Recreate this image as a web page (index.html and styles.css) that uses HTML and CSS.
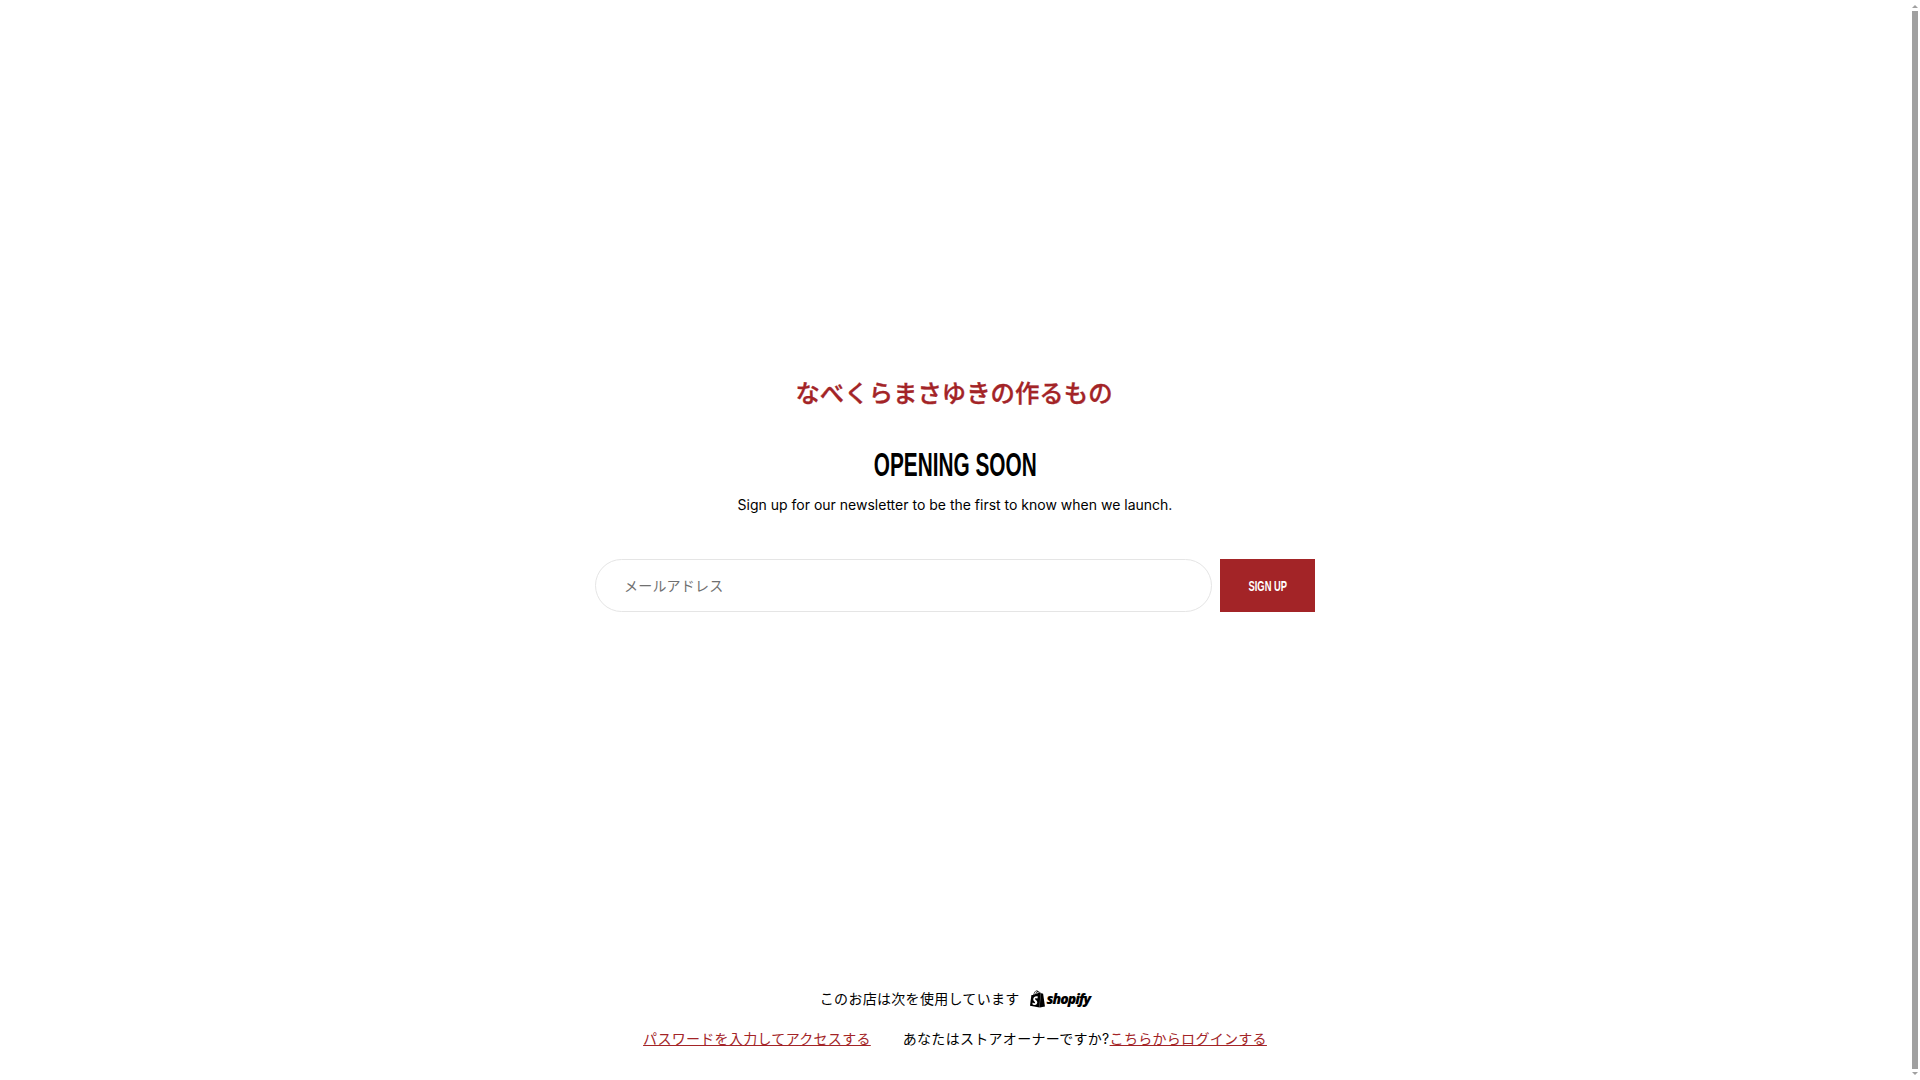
FILE: index.html
```html
<!DOCTYPE html>
<html lang="ja">
<head>
<meta charset="utf-8">
<title>なべくらまさゆきの作るもの</title>
<link rel="stylesheet" href="styles.css">
</head>
<body>
<main class="page">
  <section class="hero">
    <h1 class="store-name">なべくらまさゆきの作るもの</h1>
    <h2 class="heading"><span class="heading-text">OPENING SOON</span></h2>
    <p class="lead">Sign up for our newsletter to be the first to know when we launch.</p>
    <form class="signup">
      <input class="email" type="email" placeholder="メールアドレス">
      <button class="submit" type="button"><span class="submit-text">SIGN UP</span></button>
    </form>
  </section>
  <footer class="foot">
    <div class="powered">
      <span>このお店は次を使用しています</span>
      <span class="shopify">
        <svg class="bag" viewBox="0 0 24 24" aria-hidden="true"><path d="M15.337 23.979l7.216-1.561s-2.604-17.613-2.625-17.73c-.018-.116-.114-.192-.211-.192s-1.929-.136-1.929-.136-1.275-1.274-1.439-1.411c-.045-.037-.075-.057-.121-.074l-.914 21.104h.023zM11.71 11.305s-.81-.424-1.774-.424c-1.447 0-1.504.906-1.504 1.141 0 1.232 3.24 1.715 3.24 4.629 0 2.295-1.44 3.76-3.406 3.76-2.354 0-3.54-1.465-3.54-1.465l.646-2.086s1.245 1.066 2.28 1.066c.675 0 .975-.545.975-.932 0-1.619-2.654-1.694-2.654-4.359-.034-2.237 1.571-4.416 4.827-4.416 1.257 0 1.875.361 1.875.361l-.945 2.715-.02.01zM11.17.83c.136 0 .271.038.405.135-.984.465-2.064 1.639-2.508 3.992-.656.213-1.293.405-1.889.578C7.697 3.75 8.951.84 11.17.84V.83zm1.235 2.949v.135c-.754.232-1.583.484-2.394.736.466-1.777 1.333-2.645 2.085-2.971.193.501.309 1.176.309 2.1zm.539-2.234c.694.074 1.141.867 1.429 1.755-.349.114-.735.231-1.158.366v-.252c0-.752-.096-1.371-.271-1.871v.002zm2.992 1.289c-.02 0-.06.021-.078.021s-.289.075-.714.21c-.423-1.233-1.176-2.37-2.508-2.37h-.115C12.135.209 11.669 0 11.265 0 8.159 0 6.675 3.877 6.21 5.846c-1.194.365-2.063.636-2.16.674-.675.213-.694.232-.772.87-.075.462-1.83 14.063-1.83 14.063L15.009 24l.927-21.166z"/></svg>
        <span class="wordmark">shopify</span>
      </span>
    </div>
    <div class="links">
      <a class="link" href="#">パスワードを入力してアクセスする</a>
      <span class="owner">あなたはストアオーナーですか?<a class="link" href="#">こちらからログインする</a></span>
    </div>
  </footer>
</main>
<aside class="scrollbar" aria-hidden="true">
  <span class="arrow arrow-up"></span>
  <span class="thumb"></span>
  <span class="arrow arrow-down"></span>
</aside>
</body>
</html>
```

FILE: styles.css
```css
* { box-sizing: border-box; }
html, body { margin: 0; height: 100%; }
body {
  display: flex;
  height: 1080px;
  overflow: hidden;
  background: #fff;
  color: #000;
  font-family: Inter, "Noto Sans CJK JP", sans-serif;
  font-size: 14px;
}
.page {
  flex: 1;
  min-width: 0;
  display: flex;
  flex-direction: column;
  align-items: center;
}
.hero {
  width: 720px;
  padding-top: 373px;
  display: flex;
  flex-direction: column;
  align-items: center;
  text-align: center;
}
.store-name {
  margin: 0 2px 0 0;
  font-size: 24.4px;
  line-height: 40px;
  font-weight: 500;
  -webkit-text-stroke: 0.35px #a32427;
  color: #a32427;
}
.heading {
  margin: 32px 0 0;
  line-height: 40px;
  font-size: 33px;
  font-weight: 700;
  font-family: "Liberation Sans", sans-serif;
}
.heading-text {
  display: inline-block;
  transform: scaleX(0.63);
}
.lead {
  margin: 8px 0 0;
  font-size: 14px;
  line-height: 24px;
}
.signup {
  width: 100%;
  display: flex;
  gap: 8px;
  margin-top: 42px;
  height: 53px;
}
.email {
  flex: 1;
  min-width: 0;
  border: 1px solid #e5e5e5;
  border-radius: 27px;
  padding: 0 28px;
  background: #fff;
  font: 14px Inter, "Noto Sans CJK JP", sans-serif;
  letter-spacing: 0.2px;
  outline: none;
}
.email::placeholder { color: #707070; opacity: 1; }
.submit {
  width: 95px;
  border: 0;
  padding: 0;
  background: #a32427;
  color: #fff;
  font-family: "Liberation Sans", sans-serif;
  font-weight: 700;
  font-size: 14px;
}
.submit-text {
  display: inline-block;
  transform: scaleX(0.67);
}
.foot {
  margin-top: auto;
  padding-bottom: 30px;
  display: flex;
  flex-direction: column;
  align-items: center;
  gap: 18px;
  letter-spacing: 0.3px;
}
.powered {
  display: flex;
  align-items: center;
  gap: 9px;
  line-height: 22px;
}
.shopify { display: flex; align-items: center; gap: 1px; }
.bag { width: 17px; height: 18px; fill: #000; display: block; }
.wordmark {
  font-family: "Open Sans", sans-serif;
  font-weight: 800;
  font-style: italic;
  font-size: 14px;
  letter-spacing: -1px;
}
.links {
  display: flex;
  gap: 32px;
  line-height: 22px;
}
.link { color: #a32427; text-decoration: underline; }
.scrollbar {
  width: 10px;
  flex: none;
  display: flex;
  flex-direction: column;
  align-items: center;
  padding: 5px 0;
}
.thumb {
  flex: 1;
  width: 6px;
  margin: 3px 0;
  background: #a0a0a0;
}
.arrow { width: 0; height: 0; border-left: 3px solid transparent; border-right: 3px solid transparent; }
.arrow-up { border-bottom: 3px solid #a0a0a0; }
.arrow-down { border-top: 3px solid #a0a0a0; }
```
